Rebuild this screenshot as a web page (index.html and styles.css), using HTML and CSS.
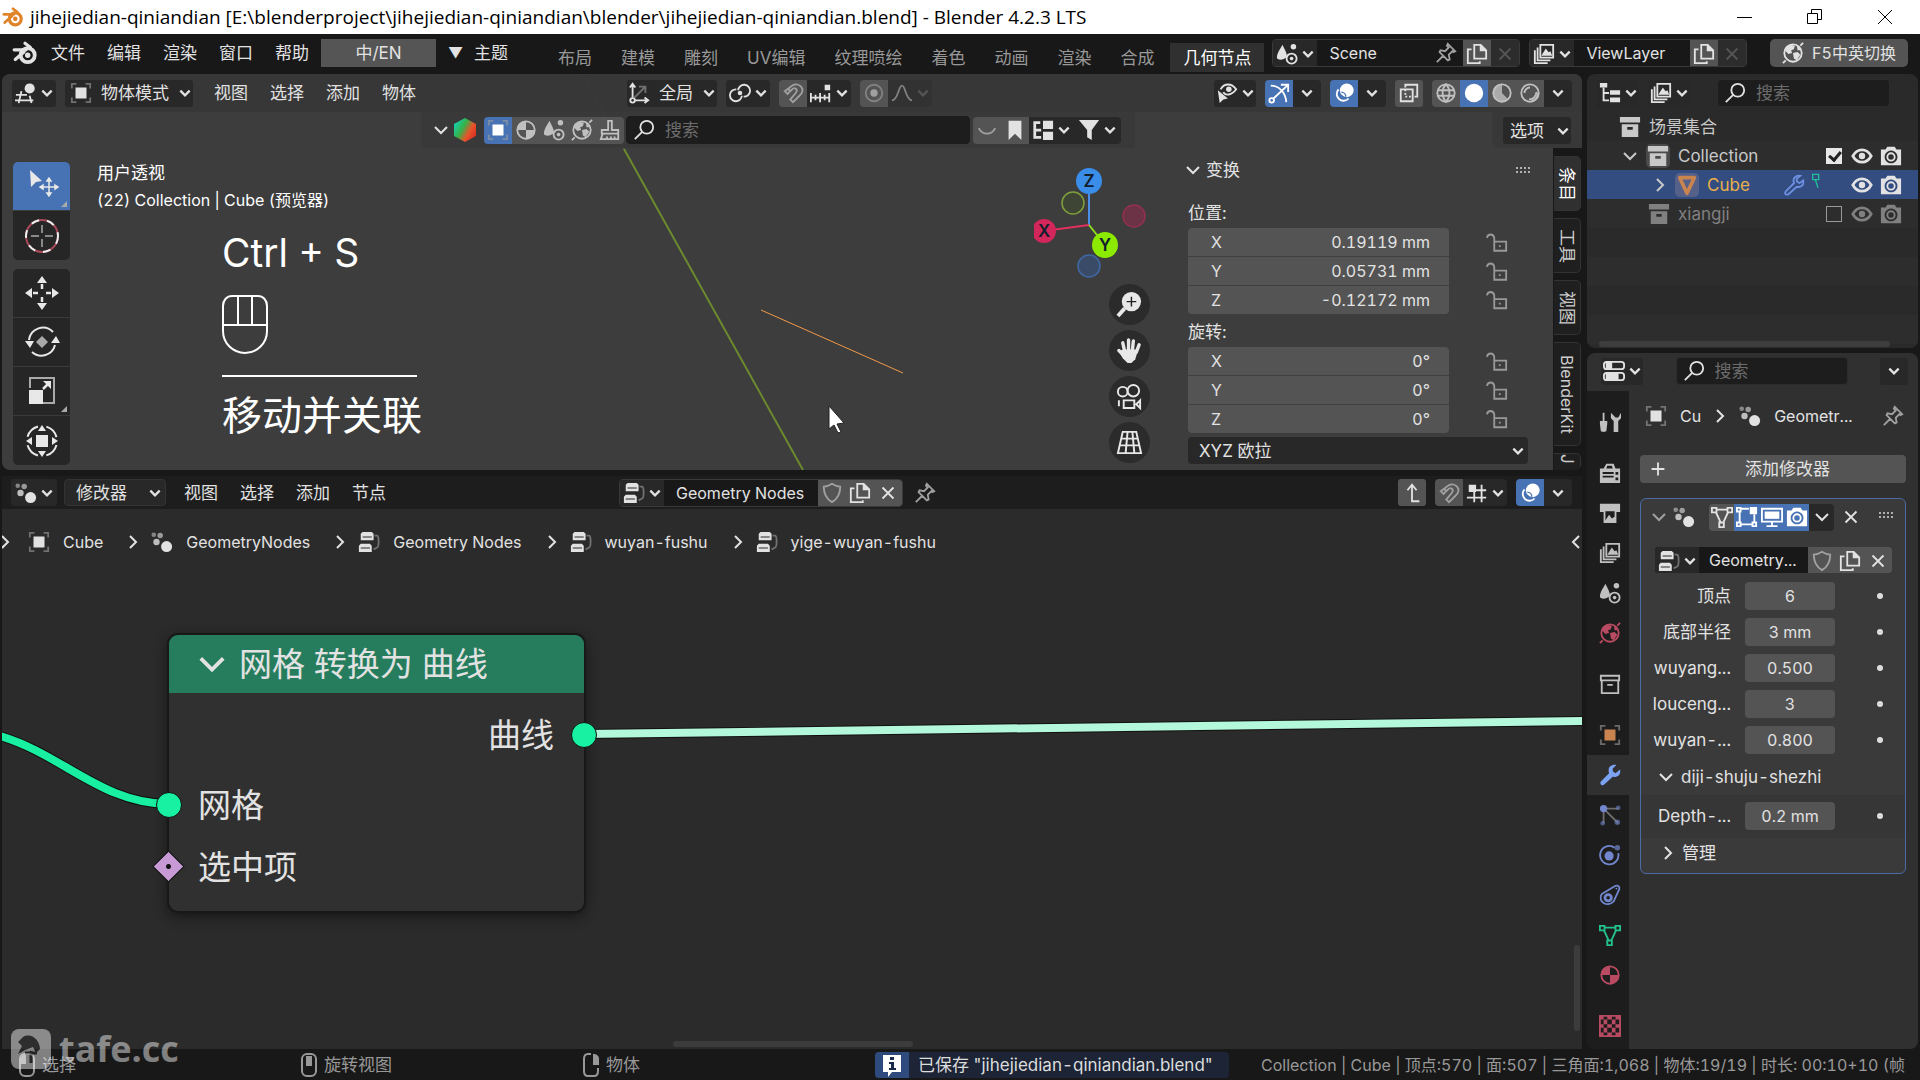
FILE: index.html
```html
<!DOCTYPE html>
<html lang="zh-CN">
<head>
<meta charset="utf-8">
<title>jihejiedian-qiniandian - Blender 4.2.3 LTS</title>
<link rel="stylesheet" href="styles.css">
</head>
<body>
<svg class="sprite" aria-hidden="true">
<symbol id="logo" viewBox="0 0 24 24"><path fill="none" stroke="currentColor" stroke-width="3" stroke-linecap="round" stroke-linejoin="round" d="M2 9h11M12 3l5 4M3 18l8-7"/><circle cx="14.500" cy="14" r="6.500" fill="none" stroke="currentColor" stroke-width="3.500"/><circle class="logo-dot" cx="14.500" cy="14" r="2.500" fill="currentColor"/></symbol>
<symbol id="chev" viewBox="0 0 12 12"><path class="s" d="M2 4l4 4 4-4"/></symbol>
<symbol id="chevr" viewBox="0 0 12 16"><path class="s" d="M3 2l6 6-6 6"/></symbol>
<symbol id="chevd" viewBox="0 0 16 12"><path class="s" d="M2 3l6 6 6-6"/></symbol>
<symbol id="x" viewBox="0 0 24 24"><path class="s" d="M6 6l12 12M18 6L6 18"/></symbol>
<symbol id="view3d" viewBox="0 0 24 24"><path class="s" d="M1 14h12M0 20h20M7 10L4 23M16 15l2 8"/><circle cx="16" cy="7" r="5.500" fill="currentColor"/></symbol>
<symbol id="obj" viewBox="0 0 24 24"><path class="s dim" d="M2 7V2h5M17 2h5v5M22 17v5h-5M7 22H2v-5"/><path fill="currentColor" d="M6 6h12v12H6z"/></symbol>
<symbol id="axes" viewBox="0 0 24 24"><path class="s" d="M5 17V3M2 6l3-4 3 4M7 20h14M18 17l4 3-4 3"/><path class="s dim" d="M7 17L18 6M12 5h7v7"/><circle class="s" cx="5" cy="20" r="2.500"/></symbol>
<symbol id="pivot" viewBox="0 0 24 24"><path class="s" d="M10 9a6.500 6.500 0 1 1 6 7M14 15a6.500 6.500 0 1 1-6-7"/><circle cx="12" cy="12" r="2.500" fill="currentColor"/></symbol>
<symbol id="magnet" viewBox="0 0 24 24"><path class="s" d="M3 10l8-6c8-5 16 5 8 11l-7 7-3-3 6-7c3-4-1-7-4-4l-5 5zM6 7l3 3M9 19l3-3"/></symbol>
<symbol id="snapinc" viewBox="0 0 24 24"><path class="s" d="M1 12v10M6 14v6M11 12v10M16 14v6M21 12v10M1 17h20"/><path fill="currentColor" d="M16 3h6v6h-6z"/></symbol>
<symbol id="prop" viewBox="0 0 24 24"><circle class="s dim" cx="12" cy="12" r="9"/><circle cx="12" cy="12" r="4" fill="currentColor"/></symbol>
<symbol id="falloff" viewBox="0 0 24 24"><path class="s" d="M1 20C8 20 8 4 12 4s4 16 11 16"/></symbol>
<symbol id="vis" viewBox="0 0 24 24"><path class="s" d="M5 8c4-7 12-7 17 0-5 7-12 7-14 3" stroke-width="2.500"/><circle cx="14" cy="8" r="3" fill="currentColor"/><path fill="currentColor" d="M2 9l11 9-5 1-4 4z"/></symbol>
<symbol id="gizmo" viewBox="0 0 24 24"><path class="s" d="M3 4c9 0 16 7 17 18M6 18L21 4M14 3h8v8"/><circle class="s" cx="4" cy="20" r="2.500"/></symbol>
<symbol id="overlay" viewBox="0 0 24 24"><circle cx="15" cy="9" r="7.500" fill="currentColor"/><path class="s" d="M6 8a7 7 0 1 0 11 10"/><path d="M9 11a5 5 0 0 1 5 5" fill="none" stroke="#4772b3" stroke-width="1.500"/></symbol>
<symbol id="xray" viewBox="0 0 24 24"><path class="s" d="M8 6V3h13v13h-3M3 8h13v13H3z"/><path class="s" stroke-dasharray="2 2" d="M8 8v8h8"/></symbol>
<symbol id="wire" viewBox="0 0 24 24"><circle class="s" cx="12" cy="12" r="9.500"/><path class="s" d="M3 9h18M3 15h18M12 2c-5 6-5 14 0 20M12 2c5 6 5 14 0 20"/></symbol>
<symbol id="solid" viewBox="0 0 24 24"><circle cx="12" cy="12" r="10" fill="currentColor"/></symbol>
<symbol id="mat" viewBox="0 0 24 24"><circle class="s" cx="12" cy="12" r="9.500"/><path fill="currentColor" d="M12 2v10H2A10 10 0 0 1 12 2zM12 12h10a10 10 0 0 1-10 10z"/></symbol>
<symbol id="matprev" viewBox="0 0 24 24"><circle class="s" cx="12" cy="12" r="9.500"/><path fill="currentColor" d="M12 2v10l7 7A10 10 0 1 1 12 2z" opacity=".8"/></symbol>
<symbol id="rend" viewBox="0 0 24 24"><circle class="s" cx="12" cy="12" r="9.500"/><path class="s" d="M6 12a6 6 0 0 1 6-6M11 19c5 0 8-4 8-8M14 21c4-1 7-5 7-9"/></symbol>
<symbol id="search" viewBox="0 0 24 24"><circle class="s" cx="15" cy="9" r="7"/><path class="s" stroke-width="2.500" d="M10 14l-8 8"/></symbol>
<symbol id="scene" viewBox="0 0 24 24"><path fill="currentColor" d="M7 2c2 4 5 9 5 13-5 5-11 3-11 1C1 11 5 6 7 2z"/><circle cx="19" cy="4" r="3" fill="currentColor"/><circle class="s" cx="17" cy="17" r="5.500"/><circle cx="17" cy="17" r="2" fill="currentColor"/></symbol>
<symbol id="world" viewBox="0 0 24 24"><circle class="s" cx="12" cy="12" r="9.500"/><path fill="currentColor" d="M4 6l5-3 5 1-1 4-3 1 1 3-4 1-4-4zM12 12l5-1 3 3-4 6-3-2zM16 3l5 6-4 0z"/><path class="s" d="M20 4l3-3M4 20l-3 3"/></symbol>
<symbol id="brush" viewBox="0 0 24 24"><path class="s" d="M10 12V2h4v10h7v4H3v-4zM4 16l-2 6h19v-6M8 22l1-3M13 22v-3M17 22v-3"/></symbol>
<symbol id="smile" viewBox="0 0 24 24"><path class="s" d="M3 10c4 8 14 8 18 0"/></symbol>
<symbol id="bookmark" viewBox="0 0 24 24"><path fill="currentColor" d="M5 2h14v21l-7-7-7 7z"/></symbol>
<symbol id="tree" viewBox="0 0 24 24"><path class="s bold" d="M9 4H3v16h7M3 12h7"/><path fill="currentColor" d="M12 2h11v9H12zM12 14h11v9H12z"/></symbol>
<symbol id="filter" viewBox="0 0 24 24"><path fill="currentColor" d="M1 1h22l-8 11v11l-5-3v-8z"/></symbol>
<symbol id="copy" viewBox="0 0 24 24"><path class="s" d="M9 2h7l6 6v9H9zM6 7H2v15h13v-2"/><path fill="currentColor" d="M15 1l8 8h-8z"/></symbol>
<symbol id="pin" viewBox="0 0 24 24"><path class="s" d="M14 2l8 8-2 1-1-1-4 4 1 5-2 1-9-9 1-2 5 1 4-4-2-2zM9 15l-7 7"/></symbol>
<symbol id="layers" viewBox="0 0 24 24"><path class="s" d="M8 2h14v14H8zM5 5v14h14M2 8v14h14"/><path fill="currentColor" d="M9 14l5-8 3 4 2-1 2 5z"/></symbol>
<symbol id="outl" viewBox="0 0 24 24"><path fill="currentColor" d="M1 1h8v5H1zM12 9h11v5H12zM12 17h11v5H12z"/><path class="s" d="M5 6v14h6M5 12h6"/></symbol>
<symbol id="arch" viewBox="0 0 24 24"><path fill="currentColor" fill-rule="evenodd" d="M1 1h22v6H1zM3 9h18v14H3zM9 12v3h6v-3z"/></symbol>
<symbol id="archo" viewBox="0 0 24 24"><path class="s" d="M2 3h20v5H2zM3 8v14h18V8M9 13h6"/></symbol>
<symbol id="eye" viewBox="0 0 24 24"><path class="s bold" d="M2 12c5-9 15-9 20 0-5 9-15 9-20 0z"/><circle cx="12" cy="12" r="3.500" fill="currentColor"/></symbol>
<symbol id="cam" viewBox="0 0 24 24"><path fill="currentColor" fill-rule="evenodd" d="M1 5h5l2-3h8l2 3h5v17H1zM12 6a7 7 0 1 0 .1 0z"/><circle class="s" cx="12" cy="13" r="4"/></symbol>
<symbol id="wrench" viewBox="0 0 24 24"><path fill="currentColor" d="M23 6l-5 4-3-2 0-3 4-4c-6-1-10 3-8 9l-9 9c-2 3 2 6 4 3l9-8c6 1 9-3 8-8z"/></symbol>
<symbol id="wrencho" viewBox="0 0 24 24"><path class="s" d="M22 7l-4 3-3-2 0-3 4-3c-5-1-9 3-7 8l-9 9c-2 3 1 4 3 3l9-8c5 1 8-2 7-7z"/></symbol>
<symbol id="mesh" viewBox="0 0 24 24"><path class="s" d="M5 4h14M5 6l6 13M19 6l-6 13M1 2h5v5H1zM18 2h5v5h-5zM9 18h5v5H9z"/></symbol>
<symbol id="meshcut" viewBox="0 0 12 24"><path class="s" d="M1 2h9v8H1zM5 10l4 12"/></symbol>
<symbol id="tri" viewBox="0 0 24 24"><path fill="none" stroke="currentColor" stroke-width="4" stroke-linejoin="round" d="M4 4h16l-8 17z"/></symbol>
<symbol id="editm" viewBox="0 0 24 24"><path class="s" d="M5 3h9M5 20h13M4 6v12M20 9v9M1 2h4v4H1zM1 18h4v4H1zM18 18h4v4h-4z"/><path fill="currentColor" d="M15 1h8v8h-8z"/></symbol>
<symbol id="mon" viewBox="0 0 24 24"><path class="s" d="M1 3h22v14H1zM12 17v4M6 22h12"/><path fill="currentColor" d="M4 6h16v8H4z"/></symbol>
<symbol id="props" viewBox="0 0 24 24"><rect class="s" x="1" y="2" width="22" height="8" rx="3"/><rect class="s" x="1" y="14" width="22" height="8" rx="3"/><path fill="currentColor" d="M3 2h7v8H3zM3 14h14v8H3z"/></symbol>
<symbol id="nodes" viewBox="0 0 24 24"><path fill="currentColor" fill-rule="evenodd" d="M5 1h10l2 2v7H3V3zM5 6v1h10V6zM3 14h10l2 2v7H1v-7zM3 18v1h10v-1z"/><path class="s dim" d="M18 5h3c2 1 2 12 0 13l-4 2"/></symbol>
<symbol id="gn" viewBox="0 0 24 24"><g fill="currentColor"><circle cx="3" cy="4" r="2.500" opacity=".5"/><circle cx="10" cy="5" r="3" opacity=".6"/><circle cx="6" cy="12" r="3.500" opacity=".8"/><circle cx="17" cy="17" r="6"/></g></symbol>
<symbol id="shield" viewBox="0 0 24 24"><path class="s" d="M12 2c3 2 6 3 9 3 0 8-2 13-9 17C5 18 3 13 3 5c3 0 6-1 9-3z"/></symbol>
<symbol id="up" viewBox="0 0 24 24"><path class="s" d="M20 21h-8V4M7 9l5-6 5 6"/></symbol>
<symbol id="grid" viewBox="0 0 24 24"><path class="s" d="M9 9v13M17 3v19M9 9h13M1 17h21"/><path fill="currentColor" d="M3 3h8v8H3z"/></symbol>
<symbol id="lock" viewBox="0 0 24 24"><path class="s" d="M9 11h13v10H9zM9 11V7c-1-5-7-5-8 0M15 15v2"/></symbol>
<symbol id="tools" viewBox="0 0 24 24"><path fill="currentColor" d="M4 2h2v9h3v3l-1 8-3 1-3-1-1-8v-3h3zM13 2v6l3 3v12h5V11l3-3V2l-3 5h-3z"/></symbol>
<symbol id="rcam" viewBox="0 0 24 24"><path fill="currentColor" fill-rule="evenodd" d="M1 7h4l3-5h8l2 5h5v16H1zM9 4L8 7h7l-1-3zM4 11v2h12v-2zM4 15v2h12v-2zM18 11v3h3v-3zM18 17v3h3v-3z"/></symbol>
<symbol id="print" viewBox="0 0 24 24"><path fill="currentColor" fill-rule="evenodd" d="M1 2h22v9h-4v12H5V11H1zM7 10v10l4-6 3 4 3-2v-6z"/></symbol>
<symbol id="part" viewBox="0 0 24 24"><path class="s dim" d="M5 5h16M5 5v16M5 5l16 16"/><g fill="currentColor"><circle cx="5" cy="5" r="4"/><circle cx="21" cy="4" r="2.500" opacity=".6"/><circle cx="4" cy="21" r="2.500" opacity=".6"/><circle cx="20" cy="20" r="3" opacity=".6"/></g></symbol>
<symbol id="phys" viewBox="0 0 24 24"><path class="s" d="M17 4a10 10 0 1 0 4 6"/><circle cx="11" cy="13" r="5" fill="currentColor"/><circle cx="20" cy="4" r="3" fill="currentColor" opacity=".7"/></symbol>
<symbol id="cons" viewBox="0 0 24 24"><path class="s" d="M3 11L18 2c3-1 5 1 4 4l-6 13C9 26-2 19 3 11z"/><circle class="s bold" cx="10" cy="15" r="3.500"/><circle cx="19" cy="5" r="1" fill="currentColor"/></symbol>
<symbol id="check" viewBox="0 0 24 24"><path fill="currentColor" d="M1 1h4v4H1zM9 1h5v4H9zM18 1h5v4h-5zM5 5h4v5H5zM14 5h4v5h-4zM1 10h4v4H1zM9 10h5v4H9zM18 10h5v4h-5zM5 14h4v5H5zM14 14h4v5h-4zM1 19h4v4H1zM9 19h5v4H9zM18 19h5v4h-5z"/><path class="s" d="M1 1h22v22H1z"/></symbol>
<symbol id="grip" viewBox="0 0 16 8"><path stroke="currentColor" stroke-width="2" stroke-dasharray="2 2" d="M0 2h16M0 6h16"/></symbol>
<symbol id="ml" viewBox="0 0 18 26"><rect class="s" x="2" y="2" width="14" height="22" rx="5"/><path fill="currentColor" d="M2 12V6l4-4h2v10z"/></symbol>
<symbol id="mm" viewBox="0 0 18 26"><rect class="s" x="2" y="2" width="14" height="22" rx="5"/><path fill="currentColor" d="M6 4h6v10H6z"/></symbol>
<symbol id="mr" viewBox="0 0 18 26"><path class="s" d="M9 2H6C3 2 2 4 2 7v12c0 3 1 5 4 5h6c3 0 4-2 4-5v-3"/><path fill="currentColor" d="M11 2c4 0 6 2 6 5v6h-6z"/></symbol>
</svg>

<header class="titlebar">
<svg class="i app"><use href="#logo"/></svg>
<h1>jihejiedian-qiniandian [E:\blenderproject\jihejiedian-qiniandian\blender\jihejiedian-qiniandian.blend] - Blender 4.2.3 LTS</h1>
<div class="winbtns">
<button aria-label="最小化"><svg width="16" height="16"><path d="M0 8.500h15" stroke="#000"/></svg></button>
<button aria-label="还原"><svg width="16" height="16"><path d="M.5 4.500h10v10H.5zM4.500 4V.5h10v10H11" stroke="#000" fill="none"/></svg></button>
<button aria-label="关闭"><svg width="16" height="16"><path d="M1 1l14 14M15 1L1 15" stroke="#000"/></svg></button>
</div>
</header>

<nav class="topbar">
<svg class="i big"><use href="#logo"/></svg>
<div class="menus"><button>文件</button><button>编辑</button><button>渲染</button><button>窗口</button><button>帮助</button></div>
<button class="lang">中/EN</button>
<button class="theme"><span class="tri">▼</span>主题</button>
<div class="tabs"><button>布局</button><button>建模</button><button>雕刻</button><button>UV编辑</button><button>纹理喷绘</button><button>着色</button><button>动画</button><button>渲染</button><button>合成</button><button class="on">几何节点</button></div>
<div class="idb scene"><button class="b w44" aria-label="场景"><svg class="i"><use href="#scene"/></svg><svg class="c"><use href="#chev"/></svg></button><label class="name"><input aria-label="场景名称" value="Scene"><svg class="i dim"><use href="#pin"/></svg></label><button class="b lit" aria-label="新建"><svg class="i"><use href="#copy"/></svg></button><button class="b off" aria-label="删除"><svg class="i"><use href="#x"/></svg></button></div>
<div class="idb layer"><button class="b w44" aria-label="视图层"><svg class="i"><use href="#layers"/></svg><svg class="c"><use href="#chev"/></svg></button><label class="name"><input aria-label="视图层名称" value="ViewLayer"></label><button class="b lit" aria-label="新建"><svg class="i"><use href="#copy"/></svg></button><button class="b off" aria-label="删除"><svg class="i"><use href="#x"/></svg></button></div>
<button class="f5"><svg class="i"><use href="#world"/></svg>F5中英切换</button>
</nav>

<main class="work">
<div class="left">
<section class="view3d">
<svg class="scene-lines" aria-hidden="true"><path d="M580 0L622 75" stroke="#55613a" stroke-width="1"/><path d="M622 75L801 396" stroke="#6c8a2e" stroke-width="2"/><path d="M759 236l142 63" stroke="#f09a48" stroke-width="1"/></svg>
<div class="hdr h1">
<button class="b w44" aria-label="编辑器类型"><svg class="i"><use href="#view3d"/></svg><svg class="c"><use href="#chev"/></svg></button>
<button class="b mode"><svg class="i"><use href="#obj"/></svg>物体模式<svg class="c"><use href="#chev"/></svg></button>
<div class="menus"><button>视图</button><button>选择</button><button>添加</button><button>物体</button></div>
<div class="mid">
<button class="b orient"><svg class="i"><use href="#axes"/></svg>全局<svg class="c"><use href="#chev"/></svg></button>
<button class="b w44" aria-label="轴心点"><svg class="i"><use href="#pivot"/></svg><svg class="c"><use href="#chev"/></svg></button>
<div class="grp"><button class="b lit dim" aria-label="吸附"><svg class="i"><use href="#magnet"/></svg></button><button class="b w44" aria-label="吸附到"><svg class="i"><use href="#snapinc"/></svg><svg class="c"><use href="#chev"/></svg></button></div>
<div class="grp"><button class="b lit dim" aria-label="衰减编辑"><svg class="i"><use href="#prop"/></svg></button><button class="b w44 fall" aria-label="衰减"><svg class="i"><use href="#falloff"/></svg><svg class="c"><use href="#chev"/></svg></button></div>
</div>
<div class="end">
<button class="b w42" aria-label="可选择性"><svg class="i"><use href="#vis"/></svg><svg class="c"><use href="#chev"/></svg></button>
<div class="grp"><button class="b on" aria-label="控件"><svg class="i"><use href="#gizmo"/></svg></button><button class="b" aria-label="控件选项"><svg class="c"><use href="#chev"/></svg></button></div>
<div class="grp"><button class="b on" aria-label="叠加层"><svg class="i"><use href="#overlay"/></svg></button><button class="b" aria-label="叠加层选项"><svg class="c"><use href="#chev"/></svg></button></div>
<button class="b lit" aria-label="透视"><svg class="i"><use href="#xray"/></svg></button>
<div class="grp"><button class="b lit soft" aria-label="线框"><svg class="i"><use href="#wire"/></svg></button><button class="b on" aria-label="实体"><svg class="i"><use href="#solid"/></svg></button><button class="b lit soft" aria-label="材质预览"><svg class="i"><use href="#matprev"/></svg></button><button class="b lit soft" aria-label="渲染"><svg class="i"><use href="#rend"/></svg></button><button class="b" aria-label="着色选项"><svg class="c"><use href="#chev"/></svg></button></div>
</div>
</div>
<div class="h2">
<div class="asset">
<svg class="c16"><use href="#chevd"/></svg><span class="hex"></span>
<div class="grp"><button class="b on" aria-label="物体"><svg class="i"><use href="#obj"/></svg></button><button class="b lit soft" aria-label="材质"><svg class="i"><use href="#mat"/></svg></button><button class="b lit soft" aria-label="场景"><svg class="i"><use href="#scene"/></svg></button><button class="b lit soft" aria-label="世界"><svg class="i"><use href="#world"/></svg></button><button class="b lit soft" aria-label="笔刷"><svg class="i"><use href="#brush"/></svg></button></div>
<label class="find wide"><svg class="i"><use href="#search"/></svg><input placeholder="搜索" aria-label="搜索资产"></label>
<div class="grp"><button class="b lit dim" aria-label="隐藏"><svg class="i"><use href="#smile"/></svg></button><button class="b lit" aria-label="书签"><svg class="i"><use href="#bookmark"/></svg></button><button class="b w44" aria-label="层级"><svg class="i"><use href="#tree"/></svg><svg class="c"><use href="#chev"/></svg></button><button class="b w48" aria-label="过滤"><svg class="i"><use href="#filter"/></svg><svg class="c"><use href="#chev"/></svg></button></div>
</div>
<div class="optbox"><button class="b opt">选项<svg class="c"><use href="#chev"/></svg></button></div>
</div>
<div class="vbody">
<div class="toolbar">
<button class="t on more" aria-label="选择"><svg class="ti" viewBox="0 0 36 36"><path fill="#e8e8e8" d="M6 2l12 11-6 1-5 5z"/><path stroke="#e8e8e8" stroke-width="1.500" fill="#e8e8e8" d="M25 11v16M17 19h16M23 13l2-3 2 3zM23 25l2 3 2-3zM19 17l-3 2 3 2zM31 17l3 2-3 2z"/></svg></button>
<button class="t last" aria-label="游标"><svg class="ti" viewBox="0 0 36 36" fill="none"><circle cx="18" cy="18" r="16" stroke="#a8495a" stroke-width="2"/><circle cx="18" cy="18" r="16" stroke="#eee" stroke-width="2" stroke-dasharray="8 8"/><path stroke="#aaa" stroke-width="1.500" d="M18 7v8M18 21v8M7 18h8M21 18h8"/></svg></button>
<button class="t first" aria-label="移动"><svg class="ti" viewBox="0 0 36 36"><path fill="#e8e8e8" d="M18 1l5 7H13zM18 35l5-7H13zM1 18l7-5v10zM35 18l-7-5v10z"/><path stroke="#e8e8e8" stroke-width="2.500" d="M18 9v5M18 22v5M9 18h5M22 18h5"/></svg></button>
<button class="t" aria-label="旋转"><svg class="ti" viewBox="0 0 36 36"><path fill="none" stroke="#e8e8e8" stroke-width="2" d="M5 16a14 14 0 0 1 24-8M31 21a14 14 0 0 1-23 7"/><path fill="#e8e8e8" d="M1 17h9l-4 7zM27 19h9l-4-7z"/><path fill="#aaa" d="M18 12l6 6-6 6-6-6z"/></svg></button>
<button class="t more" aria-label="缩放"><svg class="ti" viewBox="0 0 36 36"><path fill="none" stroke="#aaa" stroke-width="2" d="M6 15V5h24v25H19"/><path fill="#e8e8e8" d="M5 17h14v14H5zM27 8v8l-8-8z"/><path stroke="#e8e8e8" stroke-width="2.500" d="M19 16l6-6"/></svg></button>
<button class="t last" aria-label="变换"><svg class="ti" viewBox="0 0 36 36"><circle cx="18" cy="18" r="15" fill="none" stroke="#e8e8e8" stroke-width="2" stroke-dasharray="15 8.560" stroke-dashoffset="-4"/><path fill="#e8e8e8" d="M12 12h12v12H12zM18 2l4 6h-8zM18 34l4-6h-8zM2 18l6-4v8zM34 18l-6-4v8z"/></svg></button>
</div>
<div class="info">
<p>用户透视</p><p class="path">(22) Collection | Cube (预览器)</p>
<div class="keys"><p class="combo">Ctrl + S</p>
<svg width="46" height="60" fill="none" stroke="#fff" stroke-width="2"><path d="M10 1h26c5 0 9 4 9 10v25a22 22 0 0 1-44 0V11C1 5 5 1 10 1zM1 30h44M16 1v29M30 1v29"/></svg>
<hr><p>移动并关联</p></div>
</div>
<svg class="cursor" width="18" height="30"><path fill="#fff" stroke="#222" d="M1 1l15 17-7 1 4 8-3 1-4-8-5 4z"/></svg>
<div class="navcol">
<svg class="gizmo" width="124" height="120" font-size="17" font-weight="600" text-anchor="middle"><g fill="none" stroke-width="2"><path stroke="#4a90e8" d="M55 63V20"/><path stroke="#e0305c" d="M55 63L10 69"/><path stroke="#8ddb1c" d="M55 63l16 20"/></g><circle cx="55" cy="19" r="13" fill="#3a8de8"/><circle cx="10" cy="69" r="12" fill="#d3265a"/><circle cx="71" cy="83" r="13" fill="#8bea00"/><circle cx="39" cy="41" r="11" fill="#3f4535" stroke="#7fa03a" stroke-width="1.500"/><circle cx="100" cy="54" r="11" fill="#6b3345" stroke="#93304e" stroke-width="1.500"/><circle cx="55" cy="104" r="11" fill="#394b66" stroke="#3f68a4" stroke-width="1.500"/><g fill="#111d2c"><text x="55" y="25">Z</text><text x="10" y="75">X</text><text x="71" y="89">Y</text></g></svg>
<button class="nav" aria-label="缩放视图"><svg class="n" viewBox="0 0 28 28"><circle cx="16" cy="11" r="10" fill="#e8e8e8"/><path stroke="#e8e8e8" stroke-width="4" d="M9 18l-7 8"/><path stroke="#222" stroke-width="1.500" d="M16 6v10M11 11h10"/></svg></button>
<button class="nav" aria-label="平移视图"><svg class="n" viewBox="0 0 28 28"><path fill="none" stroke="#e8e8e8" stroke-width="3.500" stroke-linecap="round" d="M9 15L7 6M13 14V3M17 14l1-10M21 16l3-8M8 19l-5-5"/><path fill="#e8e8e8" d="M7 13h16l-3 10-4 4h-4l-5-5-4-7z"/></svg></button>
<button class="nav" aria-label="摄像机视图"><svg class="n" viewBox="0 0 28 28" fill="none" stroke="#e8e8e8" stroke-width="2"><circle cx="7" cy="9" r="5"/><circle cx="18" cy="8" r="6"/><path d="M8 18h11v8H8zM3 18v6M25 18l-4 4 4 4z"/></svg></button>
<button class="nav" aria-label="切换透视"><svg class="n" viewBox="0 0 28 28" fill="none" stroke="#e8e8e8" stroke-width="2"><path d="M7 3h14l5 22H2zM5 10h18M4 17h20M12 3l-2 22M17 3l2 22"/></svg></button>
</div>
<aside class="npanel">
<h2><svg class="c16"><use href="#chevd"/></svg>变换<svg class="grip"><use href="#grip"/></svg></h2>
<h3>位置:</h3>
<div class="xyz"><div class="fields"><label>X<input value="0.19119 mm"></label><label>Y<input value="0.05731 mm"></label><label>Z<input value="-0.12172 mm"></label></div><div class="locks"><svg class="i"><use href="#lock"/></svg><svg class="i"><use href="#lock"/></svg><svg class="i"><use href="#lock"/></svg></div></div>
<h3>旋转:</h3>
<div class="xyz"><div class="fields"><label>X<input value="0°"></label><label>Y<input value="0°"></label><label>Z<input value="0°"></label></div><div class="locks"><svg class="i"><use href="#lock"/></svg><svg class="i"><use href="#lock"/></svg><svg class="i"><use href="#lock"/></svg></div></div>
<div class="sel euler"><select aria-label="旋转模式"><option>XYZ 欧拉</option></select><svg class="c"><use href="#chev"/></svg></div>
</aside>
<div class="vtabs"><button class="on">条目</button><button>工具</button><button>视图</button><button class="long">BlenderKit</button><button class="cut">J</button></div>
</div>
</section>

<section class="nodeed">
<div class="hdr">
<button class="b w46" aria-label="编辑器类型"><svg class="i"><use href="#gn"/></svg><svg class="c"><use href="#chev"/></svg></button>
<div class="sel modsel"><select aria-label="类型"><option>修改器</option></select><svg class="c"><use href="#chev"/></svg></div>
<div class="menus"><button>视图</button><button>选择</button><button>添加</button><button>节点</button></div>
<div class="idb tree"><button class="b w44" aria-label="节点树"><svg class="i"><use href="#nodes"/></svg><svg class="c"><use href="#chev"/></svg></button><label class="name"><input aria-label="节点树名称" value="Geometry Nodes"></label><button class="b lit dim" aria-label="伪用户"><svg class="i"><use href="#shield"/></svg></button><button class="b lit" aria-label="新建"><svg class="i"><use href="#copy"/></svg></button><button class="b lit" aria-label="断开"><svg class="i"><use href="#x"/></svg></button></div>
<svg class="i dim"><use href="#pin"/></svg>
<div class="end">
<button class="b lit" aria-label="父级节点树"><svg class="i"><use href="#up"/></svg></button>
<div class="grp"><button class="b lit dim" aria-label="吸附"><svg class="i"><use href="#magnet"/></svg></button><button class="b w44" aria-label="吸附目标"><svg class="i"><use href="#grid"/></svg><svg class="c"><use href="#chev"/></svg></button></div>
<div class="grp"><button class="b on" aria-label="叠加层"><svg class="i"><use href="#overlay"/></svg></button><button class="b" aria-label="叠加层选项"><svg class="c"><use href="#chev"/></svg></button></div>
</div>
</div>
<div class="canvas">
<div class="crumbs"><svg class="cr"><use href="#chevr"/></svg><span><svg class="i"><use href="#obj"/></svg>Cube</span><svg class="cr"><use href="#chevr"/></svg><span><svg class="i"><use href="#gn"/></svg>GeometryNodes</span><svg class="cr"><use href="#chevr"/></svg><span><svg class="i"><use href="#nodes"/></svg>Geometry Nodes</span><svg class="cr"><use href="#chevr"/></svg><span><svg class="i"><use href="#nodes"/></svg>wuyan-fushu</span><svg class="cr"><use href="#chevr"/></svg><span><svg class="i"><use href="#nodes"/></svg>yige-wuyan-fushu</span><svg class="cr back"><use href="#chevr"/></svg></div>
<svg class="links" aria-hidden="true"><g fill="none"><path stroke="#111" stroke-width="10" d="M-2 227C60 245 100 295 167 295M582 225L1582 212"/><path stroke="#18efa0" stroke-width="8" d="M-2 227C60 245 100 295 167 295"/><path stroke="#b4f8dc" stroke-width="8" d="M582 225L1582 212"/></g></svg>
<article class="node">
<header><svg class="nc"><use href="#chevd"/></svg>网格 转换为 曲线</header>
<p class="out">曲线<i class="sock"></i></p>
<p class="in">网格<i class="sock"></i></p>
<p class="in">选中项<i class="dia"></i></p>
</article>
<i class="sb-h"></i><i class="sb-v"></i>
</div>
</section>
</div>

<div class="right">
<section class="outliner">
<div class="hdr"><button class="b w42" aria-label="编辑器类型"><svg class="i"><use href="#outl"/></svg><svg class="c"><use href="#chev"/></svg></button><button class="b w42" aria-label="显示模式"><svg class="i"><use href="#layers"/></svg><svg class="c"><use href="#chev"/></svg></button><label class="find"><svg class="i"><use href="#search"/></svg><input placeholder="搜索" aria-label="搜索大纲"></label></div>
<ul>
<li class="l0"><svg class="i"><use href="#arch"/></svg>场景集合</li>
<li class="l1"><svg class="c16"><use href="#chevd"/></svg><svg class="i tile"><use href="#arch"/></svg>Collection<span class="tog"><input type="checkbox" checked aria-label="Collection"><svg class="i"><use href="#eye"/></svg><svg class="i"><use href="#cam"/></svg></span></li>
<li class="l2 act"><svg class="cr"><use href="#chevr"/></svg><svg class="i tile or"><use href="#tri"/></svg>Cube<svg class="i wr"><use href="#wrencho"/></svg><svg class="gm"><use href="#meshcut"/></svg><span class="tog"><svg class="i"><use href="#eye"/></svg><svg class="i"><use href="#cam"/></svg></span></li>
<li class="l1 gone"><svg class="i"><use href="#arch"/></svg>xiangji<span class="tog"><input type="checkbox" aria-label="xiangji"><svg class="i"><use href="#eye"/></svg><svg class="i"><use href="#cam"/></svg></span></li>
<li></li><li></li><li></li><li></li>
</ul>
<i class="sb"></i>
</section>
<section class="props">
<div class="hdr"><button class="b w42" aria-label="编辑器类型"><svg class="i"><use href="#props"/></svg><svg class="c"><use href="#chev"/></svg></button><label class="find"><svg class="i"><use href="#search"/></svg><input placeholder="搜索" aria-label="搜索属性"></label><button class="b" aria-label="选项"><svg class="c"><use href="#chev"/></svg></button></div>
<div class="pbody">
<div class="ptabs">
<button class="gap" aria-label="工具"><svg class="i"><use href="#tools"/></svg></button><button aria-label="渲染"><svg class="i"><use href="#rcam"/></svg></button><button aria-label="输出"><svg class="i"><use href="#print"/></svg></button><button aria-label="视图层"><svg class="i"><use href="#layers"/></svg></button><button aria-label="场景"><svg class="i"><use href="#scene"/></svg></button><button class="gap red" aria-label="世界"><svg class="i"><use href="#world"/></svg></button><button class="gap" aria-label="集合"><svg class="i"><use href="#archo"/></svg></button><button class="or" aria-label="物体"><svg class="i"><use href="#obj"/></svg></button><button class="on blue" aria-label="修改器"><svg class="i"><use href="#wrench"/></svg></button><button class="blue2" aria-label="粒子"><svg class="i"><use href="#part"/></svg></button><button class="blue2" aria-label="物理"><svg class="i"><use href="#phys"/></svg></button><button class="blue2" aria-label="约束"><svg class="i"><use href="#cons"/></svg></button><button class="green" aria-label="数据"><svg class="i"><use href="#mesh"/></svg></button><button class="gap red" aria-label="材质"><svg class="i"><use href="#mat"/></svg></button><button class="red" aria-label="纹理"><svg class="i"><use href="#check"/></svg></button>
</div>
<div class="pmain">
<div class="pcrumb"><svg class="i"><use href="#obj"/></svg><span>Cu</span><svg class="cr"><use href="#chevr"/></svg><svg class="i"><use href="#gn"/></svg><span>Geometr...</span><svg class="i dim pin"><use href="#pin"/></svg></div>
<button class="addmod"><svg class="i" viewBox="0 0 24 24"><path class="s" d="M12 5v14M5 12h14"/></svg><span>添加修改器</span></button>
<div class="mod">
<div class="mhead"><svg class="c16 dim"><use href="#chevd"/></svg><svg class="i"><use href="#gn"/></svg><div class="grp"><button class="b lit" aria-label="编辑笼"><svg class="i"><use href="#mesh"/></svg></button><button class="b on" aria-label="编辑模式"><svg class="i"><use href="#editm"/></svg></button><button class="b on" aria-label="实时"><svg class="i"><use href="#mon"/></svg></button><button class="b on" aria-label="渲染"><svg class="i"><use href="#cam"/></svg></button><button class="b" aria-label="更多"><svg class="c16"><use href="#chevd"/></svg></button></div><svg class="i"><use href="#x"/></svg><svg class="grip"><use href="#grip"/></svg></div>
<div class="idb"><button class="b w44" aria-label="节点组"><svg class="i"><use href="#nodes"/></svg><svg class="c"><use href="#chev"/></svg></button><label class="name"><input aria-label="节点组名称" value="Geometry..."></label><button class="b lit dim" aria-label="伪用户"><svg class="i"><use href="#shield"/></svg></button><button class="b lit" aria-label="新建"><svg class="i"><use href="#copy"/></svg></button><button class="b lit" aria-label="断开"><svg class="i"><use href="#x"/></svg></button></div>
<div class="rows">
<label><span>顶点</span><input value="6"><i></i></label>
<label><span>底部半径</span><input value="3 mm"><i></i></label>
<label><span>wuyang...</span><input value="0.500"><i></i></label>
<label><span>louceng...</span><input value="3"><i></i></label>
<label><span>wuyan-...</span><input value="0.800"><i></i></label>
</div>
<h4><svg class="c16"><use href="#chevd"/></svg>diji-shuju-shezhi</h4>
<div class="rows sub"><label><span>Depth-...</span><input value="0.2 mm"><i></i></label></div>
<h4 class="mng"><svg class="cr"><use href="#chevr"/></svg>管理</h4>
</div>
</div>
</div>
</section>
</div>
</main>

<footer class="status">
<span class="hint"><svg class="m"><use href="#ml"/></svg>选择</span>
<span class="hint"><svg class="m"><use href="#mm"/></svg>旋转视图</span>
<span class="hint"><svg class="m"><use href="#mr"/></svg>物体</span>
<span class="report"><svg width="34" height="26"><rect width="34" height="26" fill="#2f4a7d"/><path fill="#fff" d="M8 3h18v17h-9l-4 5v-5H8z"/><path fill="#1d2b4a" d="M15 5h4v3h-4zM14 10h5v6h2v2h-7v-2h2v-4h-2z"/></svg>已保存 "jihejiedian-qiniandian.blend"</span>
<span class="stats">Collection | Cube | 顶点:570 | 面:507 | 三角面:1,068 | 物体:19/19 | 时长: 00:10+10 (帧</span>
</footer>
<div class="mark" aria-hidden="true"><svg width="40" height="40"><rect width="40" height="40" rx="8" fill="#fff"/><path fill="#333" d="M12 8c8-5 17 3 17 12l-4 4-3-6-8 3-7 4 4-8-4-4z"/><path stroke="#333" stroke-width="3" fill="none" d="M20 22v12M14 24h12"/></svg><span>tafe.cc</span></div>
</body>
</html>
```
FILE: styles.css
```css
* { box-sizing: border-box; }
html, body { height: 100%; }
body {
  margin: 0; display: grid; grid-template-rows: 34px 40px minmax(0, 1fr) 31px;
  grid-template-columns: minmax(0, 1fr);
  background: #181818; color: #e2e2e2; overflow: hidden; position: relative;
  font: 17px/24px Inter, "Noto Sans CJK SC", sans-serif; font-variant-numeric: tabular-nums;
}
button, input, select { font: inherit; color: inherit; border: 0; padding: 0; margin: 0; background: none; }
input { min-width: 0; }
h1, h2, h3, h4, p, ul, hr { margin: 0; padding: 0; font-weight: 400; }
ul { list-style: none; }
svg { flex: none; display: block; }
.sprite { position: absolute; width: 0; height: 0; }
.s { fill: none; stroke: currentColor; stroke-width: 2; }
.s.bold { stroke-width: 3; }
path.dim, circle.dim { opacity: .6; }
.i { width: 22px; height: 22px; }
.c { width: 14px; height: 14px; }
.c16 { width: 16px; height: 14px; }
.cr { width: 12px; height: 16px; }
.grip { width: 16px; height: 8px; opacity: .7; }
.dim { color: #a0a0a0; }
.soft { color: #c0c0c0; }

.titlebar { background: #fff; color: #000; display: flex; align-items: center; padding-left: 2px; }
.titlebar h1 { font: 19px/26px "Open Sans", "Noto Sans", sans-serif; margin-left: 6px; white-space: nowrap; }
.app { color: #e0842a; }
.app .logo-dot { color: #2a5f9e; }
.winbtns { margin-left: auto; display: flex; }
.winbtns button { width: 70px; height: 34px; display: grid; place-items: center; }

.topbar { display: flex; align-items: center; padding: 0 12px 2px; white-space: nowrap; }
.big { width: 26px; height: 26px; }
.menus { display: flex; gap: 22px; margin-left: 13px; }
.lang { background: #555; height: 28px; width: 115px; margin-left: 12px; }
.theme { margin-left: 12px; display: flex; gap: 14px; }
.tri { width: 12px; font-size: 15px; }
.tabs { display: flex; gap: 3px; margin-left: 37px; align-self: flex-end; color: #989898; }
.tabs button { padding: 0 13px; height: 29px; }
.tabs .on { background: #303030; color: #fff; }
.idb { display: flex; height: 28px; background: #1d1d1d; border: 1px solid #3a3a3a; border-radius: 4px; overflow: hidden; }
.name { display: flex; align-items: center; padding-left: 12px; flex: 1; background: #181818; min-width: 0; font-size: 16px; }
.name input { flex: 1; width: 40px; }
.name .i { margin-right: 6px; }
.scene { width: 248px; margin-left: 8px; }
.layer { width: 218px; margin-left: 9px; }
.f5 { margin-left: auto; background: #545454; border-radius: 5px; width: 138px; height: 28px; display: flex; align-items: center; justify-content: center; gap: 8px; font-size: 16px; }

.b { height: 27px; min-width: 28px; display: flex; align-items: center; justify-content: center; gap: 3px; background: #282828; border-radius: 3px; white-space: nowrap; }
.grp .b, .idb .b { border-radius: 0; }
.w42 { width: 42px; } .w44 { width: 44px; } .w46 { width: 46px; } .w48 { width: 48px; }
.lit { background: #545454; }
.on.b { background: #4772b3; color: #fff; }
.off { color: #555; background: #2c2c2c; }
.fall { color: #808080; background: #323232; }
.fall .c { color: #555; }
.grp { display: flex; border-radius: 4px; overflow: hidden; }

.work { display: grid; grid-template-columns: minmax(0, 1fr) 331px; gap: 5px; padding: 0 2px; min-height: 0; }
.left { display: grid; grid-template-rows: minmax(0, 396fr) minmax(0, 573fr); gap: 6px; min-height: 0; }
.hdr { display: flex; align-items: center; gap: 9px; height: 38px; padding: 0 10px; }
.end { margin-left: auto; display: flex; gap: 9px; }
.view3d { background: #3d3d3d; position: relative; border-radius: 8px; overflow: hidden; display: flex; flex-direction: column; }
.scene-lines { position: absolute; inset: 0; width: 100%; height: 100%; }
.view3d > div { position: relative; }
.h1 { background: rgba(54, 54, 54, .85); }
.h1 .menus { margin-left: 12px; }
.mode { width: 128px; gap: 9px; padding-left: 4px; }
.mid { display: flex; gap: 9px; margin-left: 202px; }
.orient { width: 90px; gap: 9px; }
.h2 { display: flex; justify-content: space-between; height: 36px; }
.asset { margin-left: 419px; width: 714px; background: rgba(56, 56, 56, .85); display: flex; align-items: center; padding-left: 12px; }
.hex { width: 22px; height: 24px; margin: 0 8px 0 5px; clip-path: polygon(50% 0, 100% 25%, 100% 75%, 50% 100%, 0 75%, 0 25%); background: linear-gradient(120deg, #16d0b0 10%, #33b34a 40%, #e8542a 65%, #d02020); }
.find { display: flex; align-items: center; background: #1d1d1d; border: 1px solid #2c2c2c; border-radius: 4px; height: 28px; padding-left: 6px; }
.find input { flex: 1; margin-left: 10px; width: 60px; }
.find input::placeholder { color: #6c6c6c; opacity: 1; }
.wide { width: 344px; margin: 0 3px 0 2px; border-color: #1d1d1d; }
.optbox { background: #383838; width: 90px; padding: 5px 11px; border-radius: 0 0 0 6px; }
.opt { width: 68px; gap: 12px; padding-left: 6px; }
.vbody { flex: 1; min-height: 0; display: flex; overflow: hidden; }
.toolbar { padding: 14px 0 0 11px; width: 69px; }
.t { display: grid; place-items: center; width: 57px; height: 49px; background: #262626; border-bottom: 1px solid #3a3a3a; position: relative; }
.t.on { background: #4772b3; border-radius: 5px 5px 0 0; }
.t.last { border-radius: 0 0 5px 5px; border: 0; margin-bottom: 9px; }
.t.first { border-radius: 5px 5px 0 0; }
.more::after { content: ""; position: absolute; right: 3px; bottom: 3px; border: 3px solid; border-color: transparent #aaa #aaa transparent; }
.ti { width: 36px; height: 36px; }
.info { margin-left: 26px; padding-top: 12px; line-height: 27px; color: #fff; white-space: nowrap; }
.path { font-size: 16px; }
.keys { margin: 14px 0 0 125px; font-size: 40px; line-height: 50px; }
.combo { font-size: 39px; }
.keys svg { margin: 17px 0 20px; }
.keys hr { border: 0; height: 2px; width: 195px; background: #fff; margin-bottom: 14px; }
.cursor { position: absolute; left: 826px; top: 257px; }
.navcol { margin-left: auto; width: 143px; padding-top: 14px; }
.gizmo { margin-bottom: 2px; }
.nav { width: 41px; height: 41px; border-radius: 50%; background: #2b2b2b; display: grid; place-items: center; margin: 0 0 5px 75px; }
.n { width: 27px; height: 27px; }
.npanel { width: 376px; padding: 8px 25px 0 11px; }
.npanel h2 { font-size: 17px; display: flex; align-items: center; gap: 5px; height: 28px; margin-left: -3px; }
.npanel h2 .grip { margin-left: auto; margin-right: -4px; }
.npanel h3 { font-size: 17px; line-height: 24px; margin: 17px 0 3px; }
.xyz + h3 { margin: 6px 0 3px; }
.xyz { display: flex; justify-content: space-between; padding-right: 20px; }
.fields { width: 261px; background: #545454; border-radius: 4px; overflow: hidden; font-size: 16px; }
.fields label { display: flex; height: 29px; align-items: center; padding: 0 19px 0 23px; border-bottom: 1px solid #404040; }
.fields input { flex: 1; text-align: right; }
.fields label:last-child, .locks svg:last-child { border: 0; height: 28px; }
.locks svg { height: 29px; padding: 3px 0; color: #999; }
.sel { position: relative; background: #282828; border-radius: 4px; height: 27px; display: flex; align-items: center; }
.sel select { appearance: none; width: 100%; height: 100%; padding-left: 11px; }
.sel .c { position: absolute; right: 3px; }
.euler { margin-top: 4px; }
.vtabs { width: 29px; background: #181818; padding: 8px 1px 0; display: flex; flex-direction: column; gap: 7px; overflow: hidden; }
.vtabs button { writing-mode: vertical-rl; text-orientation: sideways; height: 55px; flex: none; border: 1px solid #333; border-left: 0; border-radius: 0 5px 5px 0; background: #1f1f1f; color: #ccc; line-height: 26px; font-size: 17px; }
.vtabs .on { background: #303030; color: #fff; }
.vtabs .long { height: 104px; font-size: 16px; }
.vtabs .cut { height: auto; flex: 1; text-align: left; border-bottom: 0; }

.nodeed { display: flex; flex-direction: column; min-height: 0; background: #1d1d1d; }
.nodeed .hdr { height: 33px; gap: 7px; padding-left: 9px; }
.nodeed .menus { margin-left: 11px; }
.modsel { width: 102px; border: 1px solid #333; }
.tree { width: 284px; margin-left: 226px; }
.nodeed .hdr > .i { margin-left: 4px; }
.canvas { flex: 1; position: relative; background: #2b2b2b; overflow: hidden; }
.crumbs { display: flex; align-items: center; height: 66px; gap: 24px; white-space: nowrap; margin-left: -3px; font-size: 16px; }
.crumbs span { display: flex; gap: 13px; align-items: center; margin-left: -12px; }
.crumbs span:nth-child(2) { margin-left: -7px; }
.back { margin-left: auto; transform: rotate(180deg); }
.links { position: absolute; inset: 0; width: 100%; height: 100%; }
.node { position: absolute; left: 167px; top: 126px; width: 415px; height: 276px; background: #303030; border-radius: 9px; box-shadow: 0 0 0 2px #181818, 0 4px 14px #111; font-size: 33px; line-height: 50px; }
.node header { background: #257d5e; height: 58px; border-radius: 9px 9px 0 0; display: flex; align-items: center; gap: 12px; padding-left: 28px; }
.nc { width: 30px; height: 24px; }
.node p { position: relative; padding: 0 30px 0 29px; height: 50px; }
.out { text-align: right; margin: 17px 0 20px; }
.in + .in { margin-top: 12px; }
.sock { position: absolute; width: 26px; height: 26px; border-radius: 50%; background: #18f0a2; border: 1px solid #111; left: -13px; top: 12px; }
.out .sock { left: auto; right: -13px; }
.dia { position: absolute; width: 23px; height: 23px; left: -12px; top: 13px; transform: rotate(45deg); border: 1px solid #181818; background: radial-gradient(circle, #111 2px, #c79ad6 3px); }
.sb-h { position: absolute; height: 6px; width: 240px; left: 671px; bottom: 2px; background: #3c3c3c; border-radius: 3px; }
.sb-v { position: absolute; width: 6px; height: 86px; right: 2px; bottom: 18px; background: #3c3c3c; border-radius: 3px; }

.right { display: grid; grid-template-rows: minmax(0, 274fr) minmax(0, 696fr); gap: 5px; min-height: 0; }
.outliner { background: #2a2a2a; border-radius: 8px; position: relative; overflow: hidden; }
.outliner .find { margin-left: 18px; width: 173px; }
.outliner li { height: 29px; display: flex; align-items: center; color: #c8c8c8; padding-right: 16px; }
.outliner li:nth-child(even) { background: #2d2d2d; }
.l0 { padding-left: 32px; gap: 8px; }
.l1 { padding-left: 35px; }
.l1 .i, .l2 .i { margin-right: 8px; }
.l1 .c16 { margin-right: 8px; }
.l2 { padding-left: 67px; }
.l2 .cr { margin-right: 9px; color: #c8c8c8; }
.tile { background: #4a4a4a; border-radius: 5px; padding: 1px; width: 24px; height: 24px; }
.outliner li.act { background: #334d80; color: #e8b04a; }
.act .tile { background: #56618a; }
.or { color: #c98450; }
.outliner .wr { color: #6c8fe0; margin: 0 7px 0 33px; }
.gm { width: 8px; height: 16px; margin-bottom: 8px; color: #20c098; }
.outliner li.gone { padding-left: 61px; color: #808080; }
.tog { margin-left: auto; display: flex; align-items: center; gap: 7px; color: #e2e2e2; }
.outliner .tog .i { margin: 0; }
.gone .tog { color: #808080; }
.tog input { appearance: none; width: 16px; height: 16px; border: 1px solid #999; margin-right: 2px; }
.tog input:checked { background: #e8e8e8; border-color: #e8e8e8; }
.tog input:checked::after { content: ""; display: block; width: 5px; height: 9px; margin: 0 4px; border: solid #222; border-width: 0 3px 3px 0; transform: rotate(40deg); }
.sb { position: absolute; left: 12px; right: 28px; bottom: 1px; height: 6px; background: #3d3d3d; border-radius: 3px; }

.props { background: #303030; border-radius: 8px; overflow: hidden; display: flex; flex-direction: column; }
.props .hdr { justify-content: space-between; padding: 0 10px 2px 14px; }
.props .hdr .find { width: 172px; }
.pbody { flex: 1; display: flex; min-height: 0; }
.ptabs { width: 42px; background: #1d1d1d; padding-top: 11px; display: flex; flex-direction: column; color: #c0c0c0; }
.ptabs button { height: 40px; width: 42px; display: grid; place-items: center; padding-left: 4px; flex: none; }
.ptabs .gap { margin-bottom: 11px; }
.ptabs .on { background: #303030; }
.ptabs .red { color: #b84a62; } .blue { color: #7ca2f4; } .blue2 { color: #7186cc; } .green { color: #22c28c; }
.pmain { flex: 1; padding: 0 12px 0 11px; min-width: 0; }
.pcrumb { display: flex; align-items: center; gap: 13px; height: 50px; padding: 0 2px 0 5px; font-size: 16px; }
.pin { margin-left: auto; }
.addmod { width: 100%; height: 28px; margin: 14px 0 15px; background: #545454; border-radius: 4px; display: flex; align-items: center; padding-left: 7px; }
.addmod span { flex: 1; }
.mod { border: 1px solid #4a6ba5; border-radius: 6px; background: #3a3a3a; overflow: hidden; }
.mhead { display: flex; align-items: center; height: 36px; padding: 0 10px; gap: 6px; }
.mhead .grp { margin-left: 8px; }
.mhead .grp .b { min-width: 25px; }
.mhead > .grip { margin-left: auto; margin-top: -4px; }
.mod .idb { margin: 11px 13px 4px; width: 239px; }
.mod .idb .name { padding-left: 10px; }
.rows label { display: flex; align-items: center; height: 36px; }
.rows span { width: 90px; text-align: right; white-space: nowrap; margin-right: 14px; }
.rows input { width: 90px; height: 28px; background: #545454; border-radius: 4px; text-align: center; font-size: 16px; }
.rows i { width: 6px; height: 6px; border-radius: 50%; background: #ddd; margin-left: 42px; }
.mod h4 { font-size: 17px; height: 37px; display: flex; align-items: center; gap: 7px; padding-left: 17px; }
.sub { background: #363636; padding: 3px 0 4px; }
.mod .mng { padding: 0 0 5px 21px; gap: 8px; height: 35px; }

.status { display: flex; align-items: center; padding: 1px 0 0 18px; color: #989898; white-space: nowrap; overflow: hidden; }
.hint { display: flex; gap: 6px; width: 282px; align-items: center; flex: none; }
.hint:nth-child(3) { width: 293px; }
.m { width: 18px; height: 26px; }
.report { display: flex; align-items: center; gap: 9px; width: 354px; height: 26px; background: #1c2436; color: #ddd; border-radius: 4px; overflow: hidden; flex: none; }
.stats { margin-left: 32px; font-size: 16px; }
.mark { position: absolute; left: 11px; bottom: 11px; display: flex; gap: 8px; align-items: center; opacity: .45; font: 700 36px/40px "Open Sans", "Noto Sans", sans-serif; color: #fff; }
```
